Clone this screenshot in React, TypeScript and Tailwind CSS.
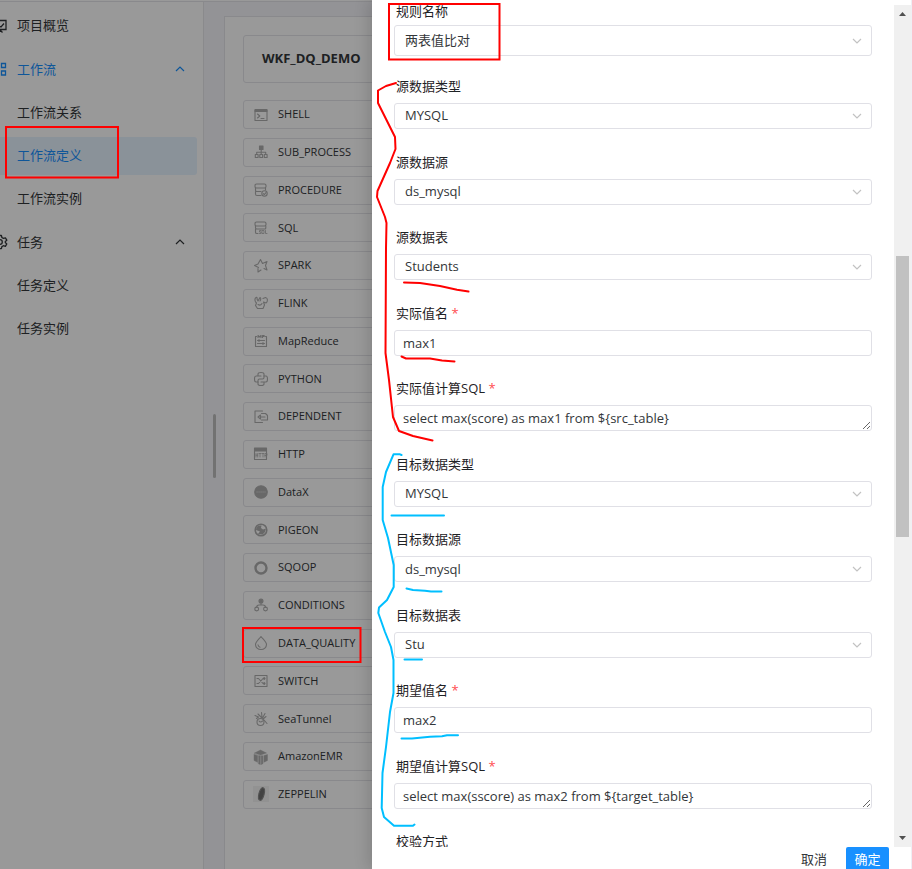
import type { ReactNode } from "react";

const icon = "size-4 shrink-0 text-[#aeaeae]";

function Glyph({ children, fill = "none" }: { children: ReactNode; fill?: string }) {
  return (
    <svg
      viewBox="0 0 16 16"
      className={icon}
      fill={fill}
      stroke="currentColor"
      strokeWidth="1.1"
      strokeLinecap="round"
      strokeLinejoin="round"
      aria-hidden="true"
    >
      {children}
    </svg>
  );
}

const tasks: { name: string; icon: ReactNode }[] = [
  {
    name: "SHELL",
    icon: (
      <Glyph>
        <rect x="2" y="2.5" width="12" height="11" />
        <path d="M2 3.5h12M2 4.5h12" />
        <path d="M4.5 7l2.3 2-2.3 2M8 11.5h3" />
      </Glyph>
    ),
  },
  {
    name: "SUB_PROCESS",
    icon: (
      <Glyph>
        <rect x="6.5" y="2" width="3.5" height="3.5" fill="currentColor" />
        <path d="M8.2 5.5v5M3.7 10.5v-2.3h9v2.3" />
        <rect x="2.3" y="10.5" width="2.8" height="3" />
        <rect x="6.8" y="10.5" width="2.8" height="3" />
        <rect x="11.3" y="10.5" width="2.8" height="3" />
      </Glyph>
    ),
  },
  {
    name: "PROCEDURE",
    icon: (
      <Glyph>
        <rect x="2" y="2" width="11" height="4" rx="1.5" />
        <path d="M2.5 6v2.5q0 1 1.5 1h4M12.5 6v2M2.5 9.5V12q0 1.5 1.5 1.5h4" />
        <circle cx="11.5" cy="11.5" r="2.7" />
        <path d="M10.3 11.6l1 1 1.7-2" />
      </Glyph>
    ),
  },
  {
    name: "SQL",
    icon: (
      <Glyph>
        <rect x="2" y="2" width="11" height="4" rx="1.5" />
        <path d="M2.5 6V8q0 1 1.5 1h8q.8 0 .8-1V6M2.5 9v3.5q0 1 1.5 1h1" />
        <path d="M8 10.5H6.5v1.5H8v1.5H6.5M9.3 10.5h1.7v3H9.3zM12.5 10.5v3H14" strokeWidth=".8" />
      </Glyph>
    ),
  },
  {
    name: "SPARK",
    icon: (
      <Glyph>
        <path d="M5.5 9.5L1.5 7.5l3.5-1.5L7.5 1.5l2 4L14 3.5l-1.5 4L14 12l-3-1.5M5 10.5v3.5l3-2" />
      </Glyph>
    ),
  },
  {
    name: "FLINK",
    icon: (
      <Glyph>
        <path d="M3.5 8C1.5 6.5 1.5 3.5 3 2.5c1-.6 1.5.5 1 1.5L5 6l2-3.5C8 3 8 4.5 7 6M3.5 8l-1 2.5 2 3h5.5l1.5-3.5-1-3 2.5 1c2-1.5 2-5-.5-5.5l-2.5 1" />
        <path d="M5 9.5q2.5 1.5 4-1" />
      </Glyph>
    ),
  },
  {
    name: "MapReduce",
    icon: (
      <Glyph>
        <path d="M3.5 3.5h-1v10h11v-10h-1M5 4.5v-2l1.5 1.5L8 2.5v2M9.5 4.5v-2h1.7v1H9.5M4.5 7.5h7M4.5 10.5h7M6 6.5v2M10 9.5v2" />
      </Glyph>
    ),
  },
  {
    name: "PYTHON",
    icon: (
      <Glyph>
        <path d="M5 5V3q0-1.5 3-1.5t3 1.5v3.5q0 1.5-1.5 1.5h-3Q5 8 5 9.5V11H3Q1.5 11 1.5 8T3 5h5" />
        <path d="M11 11v2q0 1.5-3 1.5T5 13v-2M11 5h2q1.5 0 1.5 3T13 11H8" />
      </Glyph>
    ),
  },
  {
    name: "DEPENDENT",
    icon: (
      <Glyph>
        <path d="M9.5 2H2v11.5h7.5M5 8l2.5-2v4zM7.5 8H12" />
        <path d="M8.5 4.5h4l2 2v4.5h-6" />
      </Glyph>
    ),
  },
  {
    name: "HTTP",
    icon: (
      <Glyph>
        <path d="M1.5 2h12v3h-12z" fill="currentColor" />
        <path d="M1.5 5v8.5h12V5" />
        <path
          d="M3 7.5v3.5M4.7 7.5v3.5M3 9.2h1.7M6 7.5h2M7 7.5v3.5M9 7.5h2M10 7.5v3.5M12 11V7.5h2v2h-2"
          strokeWidth=".8"
        />
      </Glyph>
    ),
  },
  {
    name: "DataX",
    icon: (
      <Glyph>
        <circle cx="8" cy="8" r="6.3" fill="currentColor" />
        <path d="M3.5 8h9" stroke="#ffffff" strokeOpacity=".55" strokeDasharray="1.2 .8" strokeLinecap="butt" />
      </Glyph>
    ),
  },
  {
    name: "PIGEON",
    icon: (
      <Glyph>
        <circle cx="8" cy="8" r="5.8" strokeWidth="1.6" />
        <path d="M3 8C3 5 5 3 8.5 3.5L8 6l2 1.5 3-1-1 3.5-2.5 2.5L5 12l2-2.5z" fill="currentColor" stroke="none" />
      </Glyph>
    ),
  },
  {
    name: "SQOOP",
    icon: (
      <Glyph>
        <circle cx="8" cy="8" r="5.5" strokeWidth="2.4" />
      </Glyph>
    ),
  },
  {
    name: "CONDITIONS",
    icon: (
      <Glyph>
        <circle cx="8" cy="4" r="2" fill="currentColor" />
        <path d="M8 6v2M3.7 10.2Q3.7 8 6 8h4q2.5 0 2.5 2.2" />
        <circle cx="3.7" cy="12" r="1.9" />
        <circle cx="12.5" cy="12" r="1.9" />
      </Glyph>
    ),
  },
  {
    name: "DATA_QUALITY",
    icon: (
      <Glyph>
        <path d="M8 1.5C5.5 4.5 2.5 7 2.5 9.5a5.5 5 0 0 0 11 0C13.5 7 10.5 4.5 8 1.5zM5 9.7a3 3 0 0 0 2 2.5" />
      </Glyph>
    ),
  },
  {
    name: "SWITCH",
    icon: (
      <Glyph>
        <rect x="2" y="2.5" width="12" height="11" />
        <path d="M4 5.5h1.5l4.5 5h2M4 10.5h1.5l4.5-5h2M11 4.5l1 1-1 1M11 9.5l1 1-1 1" />
      </Glyph>
    ),
  },
  {
    name: "SeaTunnel",
    icon: (
      <Glyph>
        <circle cx="7.5" cy="11" r="3.5" />
        <path d="M2 4.5l3.5 1.5-2 1.5M5 3l3.5 3.5M8.5 1.5l.5 4.5M12 2.5L9.5 7M13 5.5L10 8M11 9l3 3.5M6 10q1.5 2 3.5 0" />
      </Glyph>
    ),
  },
  {
    name: "AmazonEMR",
    icon: (
      <Glyph>
        <path
          d="M1.5 4L7.5 1l6 3-6 2zM1 5.5v6l3.5 1.7V6.5zM5.5 6.8h1.7V15.5l-1.7-.8zM8.2 6.8h1.7v7.9l-1.7.8zM11 6.5l3.5-1v6L11 13.2z"
          fill="currentColor"
          strokeWidth=".4"
        />
      </Glyph>
    ),
  },
  {
    name: "ZEPPELIN",
    icon: (
      <Glyph>
        <rect x="0" y="0" width="16" height="16" fill="#f3f3f3" stroke="none" />
        <ellipse cx="8.5" cy="8" rx="2.6" ry="6.5" transform="rotate(14 8.5 8)" fill="#707070" stroke="#8a8a8a" />
      </Glyph>
    ),
  },
];

function Chevron({ up = false }: { up?: boolean }) {
  return (
    <svg viewBox="0 0 10 6" className="h-1.5 w-2.5" fill="none" stroke="currentColor" strokeWidth="1.2" aria-hidden="true">
      <path d={up ? "M1 5l4-4 4 4" : "M1 1l4 4 4-4"} />
    </svg>
  );
}

const overviewIcon = (
  <svg viewBox="0 0 16 16" className="size-4" fill="none" stroke="currentColor" strokeWidth="1.3" aria-hidden="true">
    <path d="M1 2.5h13v9H1zM8 11.5V14M5.5 14.5L8 12l2.5 2.5M7 8l2 1 3-3.5" />
  </svg>
);

const flowIcon = (
  <svg viewBox="0 0 16 16" className="size-4" fill="none" stroke="currentColor" strokeWidth="1.3" aria-hidden="true">
    <path d="M3 2.5h4v4H3zM9.5 2.5h4v4h-4zM3 10h4v4H3zM9.5 10h4v4h-4z" />
  </svg>
);

const gearIcon = (
  <svg viewBox="0 0 16 16" className="size-4" fill="none" stroke="currentColor" strokeWidth="1.3" strokeLinejoin="round" aria-hidden="true">
    <path d="M6.6 1.5h2.8l.5 2 1.5.9 2-.6 1.4 2.4L13.3 7.6v1l1.5 1.3-1.4 2.4-2-.6-1.5.9-.5 2H6.6l-.5-2-1.5-.9-2 .6-1.4-2.4 1.5-1.3v-1L1.2 6.2l1.4-2.4 2 .6 1.5-.9z" />
    <circle cx="8" cy="8" r="2.3" />
  </svg>
);

type MenuItem = { name: string; icon?: ReactNode; group?: boolean; blue?: boolean; selected?: boolean };

const menu: MenuItem[] = [
  { name: "项目概览", icon: overviewIcon },
  { name: "工作流", icon: flowIcon, group: true, blue: true },
  { name: "工作流关系" },
  { name: "工作流定义", blue: true, selected: true },
  { name: "工作流实例" },
  { name: "任务", icon: gearIcon, group: true },
  { name: "任务定义" },
  { name: "任务实例" },
];

function Sidebar() {
  return (
    <nav className="w-51 shrink-0 overflow-hidden border-r border-[#e6e6ea] bg-white pt-[5px] pr-1.5">
      <div className="flex h-[341px] flex-col justify-between">
        {menu.map((item) => (
          <a
            key={item.name}
            href="#"
            className={`flex h-[38px] items-center rounded-r-[3px] pr-3 text-[13px] ${item.blue ? "text-[#1890ff]" : "text-[#333639]"} ${item.selected ? "bg-[#e6f3ff]" : ""}`}
          >
            <span className="-ml-2 w-[25px] shrink-0">{item.icon}</span>
            <span className="flex-1">{item.name}</span>
            {item.group && <Chevron up />}
          </a>
        ))}
      </div>
    </nav>
  );
}

function Canvas() {
  return (
    <main className="flex min-w-0 flex-1 bg-[#f6f6fb]">
      <div className="flex w-5 shrink-0 items-center justify-center pt-5">
        <div className="h-16 w-[3px] rounded-full bg-[#bfbfbf]" />
      </div>
      <section className="mt-3.5 flex-1 border-t border-l border-[#e4e4ea] bg-white pt-[18px] pl-[18px]">
        <h1 className="flex h-12 items-center rounded-[3px] border border-[#e4e4ea] pl-[18px] text-[13px] font-bold text-[#333639]">
          WKF_DQ_DEMO
        </h1>
        <ul className="mt-[17px] flex h-[709px] flex-col justify-between">
          {tasks.map((task) => (
            <li
              key={task.name}
              className="flex h-[29px] items-center gap-[9px] rounded-[3px] border border-[#e4e4ea] pl-[9px] text-[11px] text-[#333639]"
            >
              {task.icon}
              {task.name}
            </li>
          ))}
        </ul>
      </section>
    </main>
  );
}

type FormField = { id: string; label: string; value: string; kind: "select" | "input" | "textarea"; required?: boolean };

const fields: FormField[] = [
  { id: "src-type", label: "源数据类型", value: "MYSQL", kind: "select" },
  { id: "src-source", label: "源数据源", value: "ds_mysql", kind: "select" },
  { id: "src-table", label: "源数据表", value: "Students", kind: "select" },
  { id: "actual-name", label: "实际值名", value: "max1", kind: "input", required: true },
  {
    id: "actual-sql",
    label: "实际值计算SQL",
    value: "select max(score) as max1 from ${src_table}",
    kind: "textarea",
    required: true,
  },
  { id: "target-type", label: "目标数据类型", value: "MYSQL", kind: "select" },
  { id: "target-source", label: "目标数据源", value: "ds_mysql", kind: "select" },
  { id: "target-table", label: "目标数据表", value: "Stu", kind: "select" },
  { id: "expected-name", label: "期望值名", value: "max2", kind: "input", required: true },
  {
    id: "expected-sql",
    label: "期望值计算SQL",
    value: "select max(sscore) as max2 from ${target_table}",
    kind: "textarea",
    required: true,
  },
];

function Select({ id, value, tall = false }: { id: string; value: string; tall?: boolean }) {
  return (
    <div className="relative">
      <select
        id={id}
        defaultValue={value}
        className={`block w-full appearance-none rounded-[3px] border border-[#e0e0e6] bg-white pl-2.5 text-[13px] text-[#333639] outline-none ${tall ? "h-[31px]" : "h-[26px]"}`}
      >
        <option>{value}</option>
      </select>
      <span className="pointer-events-none absolute inset-y-0 right-2.5 flex items-center text-[#c2c2c2]">
        <Chevron />
      </span>
    </div>
  );
}

function Field({ field }: { field: FormField }) {
  return (
    <div className="flex flex-col gap-1.5">
      <label htmlFor={field.id} className="pl-0.5 text-[13px] leading-[22px] text-[#1f2225]">
        {field.label}
        {field.required && <span className="text-[#ff4d4f]"> *</span>}
      </label>
      {field.kind === "select" && <Select id={field.id} value={field.value} />}
      {field.kind === "input" && (
        <input
          id={field.id}
          defaultValue={field.value}
          className="h-[26px] rounded-[3px] border border-[#e0e0e6] pl-2 text-[13px] text-[#333639] outline-none"
        />
      )}
      {field.kind === "textarea" && (
        <textarea
          id={field.id}
          rows={1}
          defaultValue={field.value}
          className="h-[26px] resize-y overflow-hidden rounded-[3px] border border-[#e0e0e6] pl-2 text-[13px] leading-6 text-[#333639] outline-none"
        />
      )}
    </div>
  );
}

function Scrollbar() {
  return (
    <div className="mt-[5px] flex w-[17px] shrink-0 flex-col items-center bg-[#f0f0f0] text-[#505050]">
      <svg viewBox="0 0 17 17" className="size-[17px] shrink-0" fill="currentColor" aria-hidden="true">
        <path d="M5 11h7L8.5 7z" />
      </svg>
      <div className="flex w-full flex-1 flex-col items-center pt-[234px]">
        <div className="h-[281px] w-[13px] bg-[#c1c1c1]" />
      </div>
      <svg viewBox="0 0 17 17" className="size-[17px] shrink-0" fill="currentColor" aria-hidden="true">
        <path d="M5 6h7l-3.5 4z" />
      </svg>
    </div>
  );
}

function Drawer() {
  return (
    <aside className="absolute inset-y-0 right-0 flex w-[540px] flex-col border-r border-[#efeff5] bg-white shadow-[-4px_0_14px_rgba(0,0,0,0.14)]">
      <div className="flex min-h-0 flex-1">
        <form className="min-w-0 flex-1 overflow-hidden pr-[22px] pl-[22px]">
          <div className="flex flex-col gap-[3px]">
            <label htmlFor="rule" className="pl-0.5 text-[13px] leading-[22px] text-[#1f2225]">
              规则名称
            </label>
            <Select id="rule" value="两表值比对" tall />
          </div>
          <div className="mt-[19px] flex h-[734px] flex-col justify-between">
            {fields.map((field) => (
              <Field key={field.id} field={field} />
            ))}
          </div>
          <p className="mt-[21px] pl-0.5 text-[13px] leading-[22px] text-[#1f2225]">校验方式</p>
        </form>
        <Scrollbar />
      </div>
      <footer className="flex h-[22px] shrink-0 items-start justify-end gap-[7px] overflow-hidden pr-[22px] text-[13px] leading-6">
        <button type="button" className="px-3 text-[#333639]">
          取消
        </button>
        <button type="button" className="w-[43px] rounded-t-[2px] bg-[#1890ff] text-white">
          确定
        </button>
      </footer>
    </aside>
  );
}

function Annotations() {
  return (
    <svg
      className="pointer-events-none absolute top-0 left-0 h-[869px] w-[912px]"
      viewBox="0 0 912 869"
      fill="none"
      strokeWidth="2"
      strokeLinecap="round"
      strokeLinejoin="round"
      aria-hidden="true"
    >
      <g stroke="#ff0000">
        <path strokeLinejoin="miter" d="M6 127h112v50.5H6zM243 628h117.5v34H243zM389 4h110.5v55.5H389z" />
        <path d="M396 83L386 86 378 90.5V103L386 119 395 137 395.5 149 390 163 377.5 191 377 197 385 217 386.5 223 386 248 385.5 353 389 380 393 417 399 431 413 436 432.5 440.5" />
        <path d="M404 282.5L420 283 440 286 457 289.7 468.5 291.5M401.5 356.5L406 358.5H430L442 360.5 454.5 361.5" />
      </g>
      <g stroke="#00bfff">
        <path d="M401.5 455L400 454.3H393.5L386 472 382.7 487V520L388 538 392 557 393.7 565V587L387 600 379 607.5 378.3 613 385 632 391 647 393.5 660V693L390 712 386 747 382.5 773 381.7 808 384 817 394 825.7H413L414.5 824.5" />
        <path d="M391.5 515.5H444M406.5 588.5L413 590 425 590.7 431 591.5H441.5M404.5 659.5H422M401.5 738.5H412L430 736.7 442 736.3 447 735.3H458" />
      </g>
    </svg>
  );
}

export default function App() {
  return (
    <div className="relative flex h-screen flex-col overflow-hidden bg-white font-['Open_Sans','Noto_Sans_CJK_SC',sans-serif]">
      <header className="h-0.5 shrink-0 border-b border-[#e4e4ea] bg-white" />
      <div className="flex min-h-0 flex-1">
        <Sidebar />
        <Canvas />
      </div>
      <div className="absolute inset-0 bg-black/40" />
      <Drawer />
      <Annotations />
    </div>
  );
}
